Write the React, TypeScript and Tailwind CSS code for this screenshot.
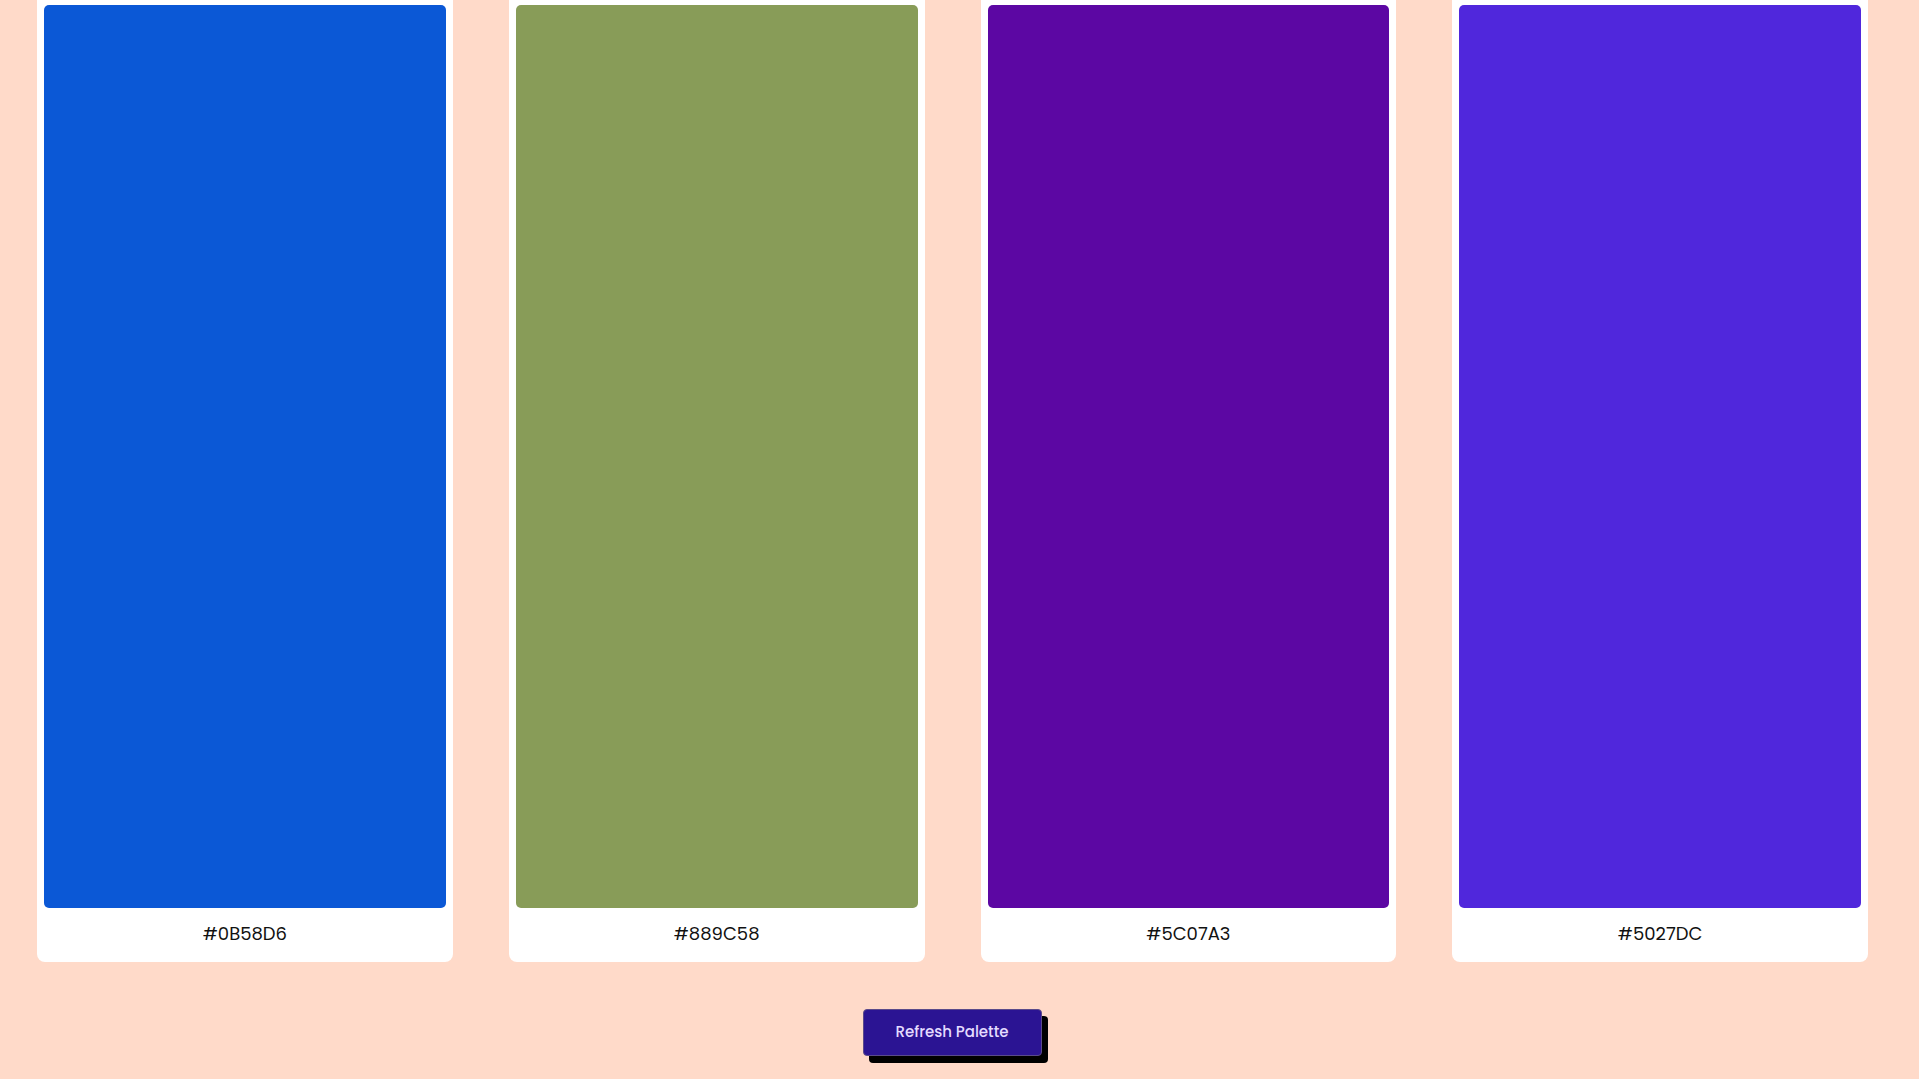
const colors = ['#0B58D6', '#889C58', '#5C07A3', '#5027DC']

function Swatch({ hex }: { hex: string }) {
  return (
    <div className="flex flex-col rounded-b-lg bg-white px-[7px] pt-[5px] pb-[15px]">
      <div className="h-[903px] rounded-[5px]" style={{ backgroundColor: hex }} />
      <p className="mt-[12px] text-center text-[18px] leading-[27px] text-[#111]">{hex}</p>
    </div>
  )
}

export default function App() {
  return (
    <div className="h-[1079px] overflow-hidden bg-[#FFDAC9] font-['Poppins','Inter','Noto_Sans',sans-serif]">
      <div className="grid grid-cols-4 gap-14 pl-[37px] pr-[51px]">
        {colors.map(hex => (
          <Swatch key={hex} hex={hex} />
        ))}
      </div>
      <div className="mt-[47px] flex justify-center pr-[15px]">
        <button className="h-[47px] w-[179px] rounded-[4px] border border-[#5a4a8a] bg-[#2B1493] text-[15px] font-medium text-[#E4DCFF] shadow-[6px_7px_0_#000]">
          Refresh Palette
        </button>
      </div>
    </div>
  )
}
